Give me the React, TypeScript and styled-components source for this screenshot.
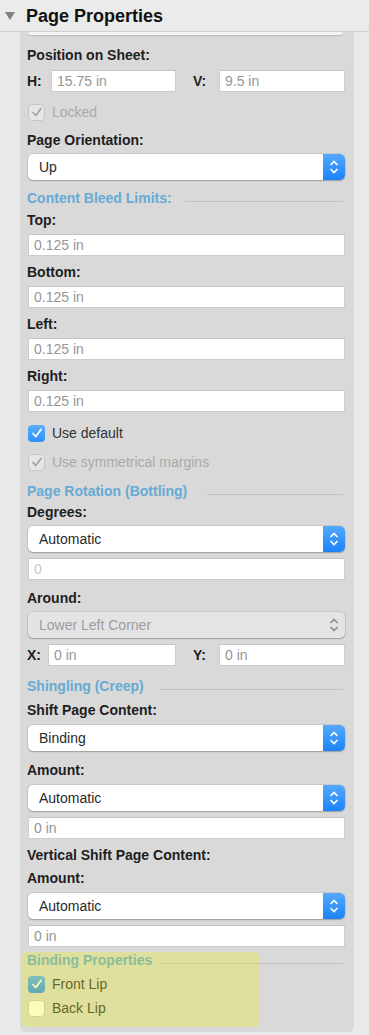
import React from "react";
import styled, { createGlobalStyle } from "styled-components";

const GlobalStyle = createGlobalStyle`
  body {
    margin: 0;
    background: #e9e9e9;
    font-family: "Liberation Sans", Arial, sans-serif;
  }
`;

const Page = styled.div`
  width: 369px;
`;

const Header = styled.header`
  height: 31px;
  display: flex;
  align-items: center;
  gap: 11px;
  padding-left: 5px;
  border-bottom: 1px solid #cfcfcf;
  background: #ebebeb;
`;

const Disclosure = styled.span`
  width: 0;
  height: 0;
  border-left: 5px solid transparent;
  border-right: 5px solid transparent;
  border-top: 8px solid #808080;
`;

const HeaderTitle = styled.h1`
  margin: 0;
  font-size: 18px;
  line-height: 22px;
  font-weight: 700;
  color: #111;
`;

const Panel = styled.section`
  margin-left: 20px;
  width: 334px;
  box-sizing: border-box;
  padding: 0 9px 5px 8px;
  background: #d9d9d9;
  border-radius: 0 0 6px 6px;
  display: flex;
  flex-direction: column;
`;

const FieldStub = styled.div`
  height: 3px;
  margin-right: 2px;
  background: #f3f3f3;
  border-radius: 0 0 5px 5px;
  box-shadow: 0 1px 1px rgba(0, 0, 0, 0.15);
`;

const Label = styled.div<{ $mt: number }>`
  margin-top: ${(p) => p.$mt}px;
  font-size: 14px;
  line-height: 16px;
  font-weight: 700;
  color: #1e1e1e;
  margin-left: -1px;
`;

const Field = styled.div<{ $mt?: number; $faint?: boolean }>`
  margin-top: ${(p) => p.$mt ?? 0}px;
  height: 22px;
  box-sizing: border-box;
  flex: 1;
  padding-left: 5px;
  background: #fff;
  border: 1px solid #cdcdcd;
  border-top-color: #c4c4c4;
  font-size: 14px;
  line-height: 20px;
  color: ${(p) => (p.$faint ? "#c9c9c9" : "#969696")};
`;

const PairRow = styled.div<{ $mt: number }>`
  margin-top: ${(p) => p.$mt}px;
  display: grid;
  grid-template-columns: 148px 1fr;
  column-gap: 18px;
`;

const Pair = styled.div`
  display: flex;
  align-items: center;
`;

const PairLabel = styled.span<{ $w: number }>`
  width: ${(p) => p.$w}px;
  margin-left: -1px;
  font-size: 14px;
  font-weight: 700;
  color: #1e1e1e;
`;

const SelectBox = styled.div<{ $mt: number; $disabled?: boolean }>`
  margin-top: ${(p) => p.$mt}px;
  height: 26px;
  display: flex;
  background: ${(p) => (p.$disabled ? "#e4e4e4" : "#fff")};
  border-radius: 5px;
  box-shadow: 0 0 0 0.5px rgba(0, 0, 0, 0.14), 0 1px 1.5px rgba(0, 0, 0, 0.22);
`;

const SelectText = styled.span<{ $disabled?: boolean }>`
  flex: 1;
  padding-left: 11px;
  font-size: 14px;
  line-height: 26px;
  color: ${(p) => (p.$disabled ? "#9c9c9c" : "#2a2a2a")};
`;

const Stepper = styled.span<{ $disabled?: boolean }>`
  width: 22px;
  display: flex;
  align-items: center;
  justify-content: center;
  border-radius: 0 5px 5px 0;
  background: ${(p) =>
    p.$disabled ? "transparent" : "linear-gradient(#55a9fd, #1b83fa)"};
`;

const CheckRow = styled.div<{ $mt: number; $dim?: boolean }>`
  margin-top: ${(p) => p.$mt}px;
  height: 18px;
  display: flex;
  align-items: center;
  gap: 7px;
  font-size: 14px;
  color: ${(p) => (p.$dim ? "#a9a9a9" : "#333")};
`;

type CheckState = "on" | "off" | "dim";

const Box = styled.span<{ $state: CheckState }>`
  width: 17px;
  height: 17px;
  box-sizing: border-box;
  border-radius: 4px;
  display: flex;
  align-items: center;
  justify-content: center;
  background: ${(p) =>
    p.$state === "on" ? "linear-gradient(#5aaefc, #2f90f9)" : p.$state === "dim" ? "#e6e6e6" : "#fff"};
  border: ${(p) => (p.$state === "on" ? "none" : "1px solid #c6c6c6")};
`;

const TitleRow = styled.div<{ $mt: number }>`
  margin-top: ${(p) => p.$mt}px;
  display: flex;
  align-items: flex-start;
  margin-left: -1px;
`;

const TitleText = styled.span`
  font-size: 14px;
  line-height: 16px;
  font-weight: 700;
  color: #66abd4;
`;

const TitleLine = styled.span<{ $w: number }>`
  margin-left: auto;
  margin-right: 2px;
  margin-top: 11px;
  width: ${(p) => p.$w}px;
  height: 1px;
  background: #c3c3c3;
`;

const Highlighted = styled.div<{ $mt: number }>`
  position: relative;
  margin-top: ${(p) => p.$mt}px;
  margin-left: -7px;
  padding: 0 0 10px 7px;
  display: flex;
  flex-direction: column;

  &::after {
    content: "";
    position: absolute;
    left: 0;
    top: 0;
    bottom: 0;
    width: 239px;
    border-radius: 6px;
    background: rgba(242, 242, 0, 0.27);
    pointer-events: none;
  }
`;

function Chevrons({ color }: { color: string }) {
  return (
    <svg width="10" height="14" viewBox="0 0 10 14">
      <path d="M1.5 5 L5 1.5 L8.5 5" fill="none" stroke={color} strokeWidth="1.6" />
      <path d="M1.5 9 L5 12.5 L8.5 9" fill="none" stroke={color} strokeWidth="1.6" />
    </svg>
  );
}

function Select({ value, mt, disabled }: { value: string; mt: number; disabled?: boolean }) {
  return (
    <SelectBox $mt={mt} $disabled={disabled}>
      <SelectText $disabled={disabled}>{value}</SelectText>
      <Stepper $disabled={disabled}>
        <Chevrons color={disabled ? "#8a8a8a" : "#fff"} />
      </Stepper>
    </SelectBox>
  );
}

function Check({ state, label, mt }: { state: CheckState; label: string; mt: number }) {
  return (
    <CheckRow $mt={mt} $dim={state === "dim"}>
      <Box $state={state}>
        {state !== "off" && (
          <svg width="12" height="12" viewBox="0 0 12 12">
            <path
              d="M2 6.5 L4.8 9.5 L10 2.5"
              fill="none"
              stroke={state === "on" ? "#fff" : "#a5a5a5"}
              strokeWidth="1.8"
              strokeLinecap="round"
              strokeLinejoin="round"
            />
          </svg>
        )}
      </Box>
      {label}
    </CheckRow>
  );
}

function SectionTitle({ text, line, mt }: { text: string; line: number; mt: number }) {
  return (
    <TitleRow $mt={mt}>
      <TitleText>{text}</TitleText>
      <TitleLine $w={line} />
    </TitleRow>
  );
}

export default function App() {
  return (
    <Page>
      <GlobalStyle />
      <Header>
        <Disclosure />
        <HeaderTitle>Page Properties</HeaderTitle>
      </Header>
      <Panel>
        <FieldStub />

        <Label $mt={12}>Position on Sheet:</Label>
        <PairRow $mt={7}>
          <Pair>
            <PairLabel $w={24}>H:</PairLabel>
            <Field>15.75 in</Field>
          </Pair>
          <Pair>
            <PairLabel $w={26}>V:</PairLabel>
            <Field>9.5 in</Field>
          </Pair>
        </PairRow>
        <Check state="dim" label="Locked" mt={11} />

        <Label $mt={11}>Page Orientation:</Label>
        <Select value="Up" mt={6} />

        <SectionTitle text="Content Bleed Limits:" line={158} mt={10} />
        <Label $mt={6}>Top:</Label>
        <Field $mt={6}>0.125 in</Field>
        <Label $mt={8}>Bottom:</Label>
        <Field $mt={6}>0.125 in</Field>
        <Label $mt={8}>Left:</Label>
        <Field $mt={6}>0.125 in</Field>
        <Label $mt={8}>Right:</Label>
        <Field $mt={6}>0.125 in</Field>
        <Check state="on" label="Use default" mt={12} />
        <Check state="dim" label="Use symmetrical margins" mt={11} />

        <SectionTitle text="Page Rotation (Bottling)" line={136} mt={12} />
        <Label $mt={5}>Degrees:</Label>
        <Select value="Automatic" mt={6} />
        <Field $mt={6} $faint>
          0
        </Field>
        <Label $mt={10}>Around:</Label>
        <Select value="Lower Left Corner" mt={6} disabled />
        <PairRow $mt={6}>
          <Pair>
            <PairLabel $w={21}>X:</PairLabel>
            <Field>0 in</Field>
          </Pair>
          <Pair>
            <PairLabel $w={26}>Y:</PairLabel>
            <Field>0 in</Field>
          </Pair>
        </PairRow>

        <SectionTitle text="Shingling (Creep)" line={183} mt={12} />
        <Label $mt={8}>Shift Page Content:</Label>
        <Select value="Binding" mt={7} />
        <Label $mt={11}>Amount:</Label>
        <Select value="Automatic" mt={7} />
        <Field $mt={6}>0 in</Field>
        <Label $mt={8}>Vertical Shift Page Content:</Label>
        <Label $mt={7}>Amount:</Label>
        <Select value="Automatic" mt={7} />
        <Field $mt={6}>0 in</Field>

        <Highlighted $mt={5}>
          <SectionTitle text="Binding Properties" line={183} mt={0} />
          <Check state="on" label="Front Lip" mt={7} />
          <Check state="off" label="Back Lip" mt={6} />
        </Highlighted>
      </Panel>
    </Page>
  );
}
